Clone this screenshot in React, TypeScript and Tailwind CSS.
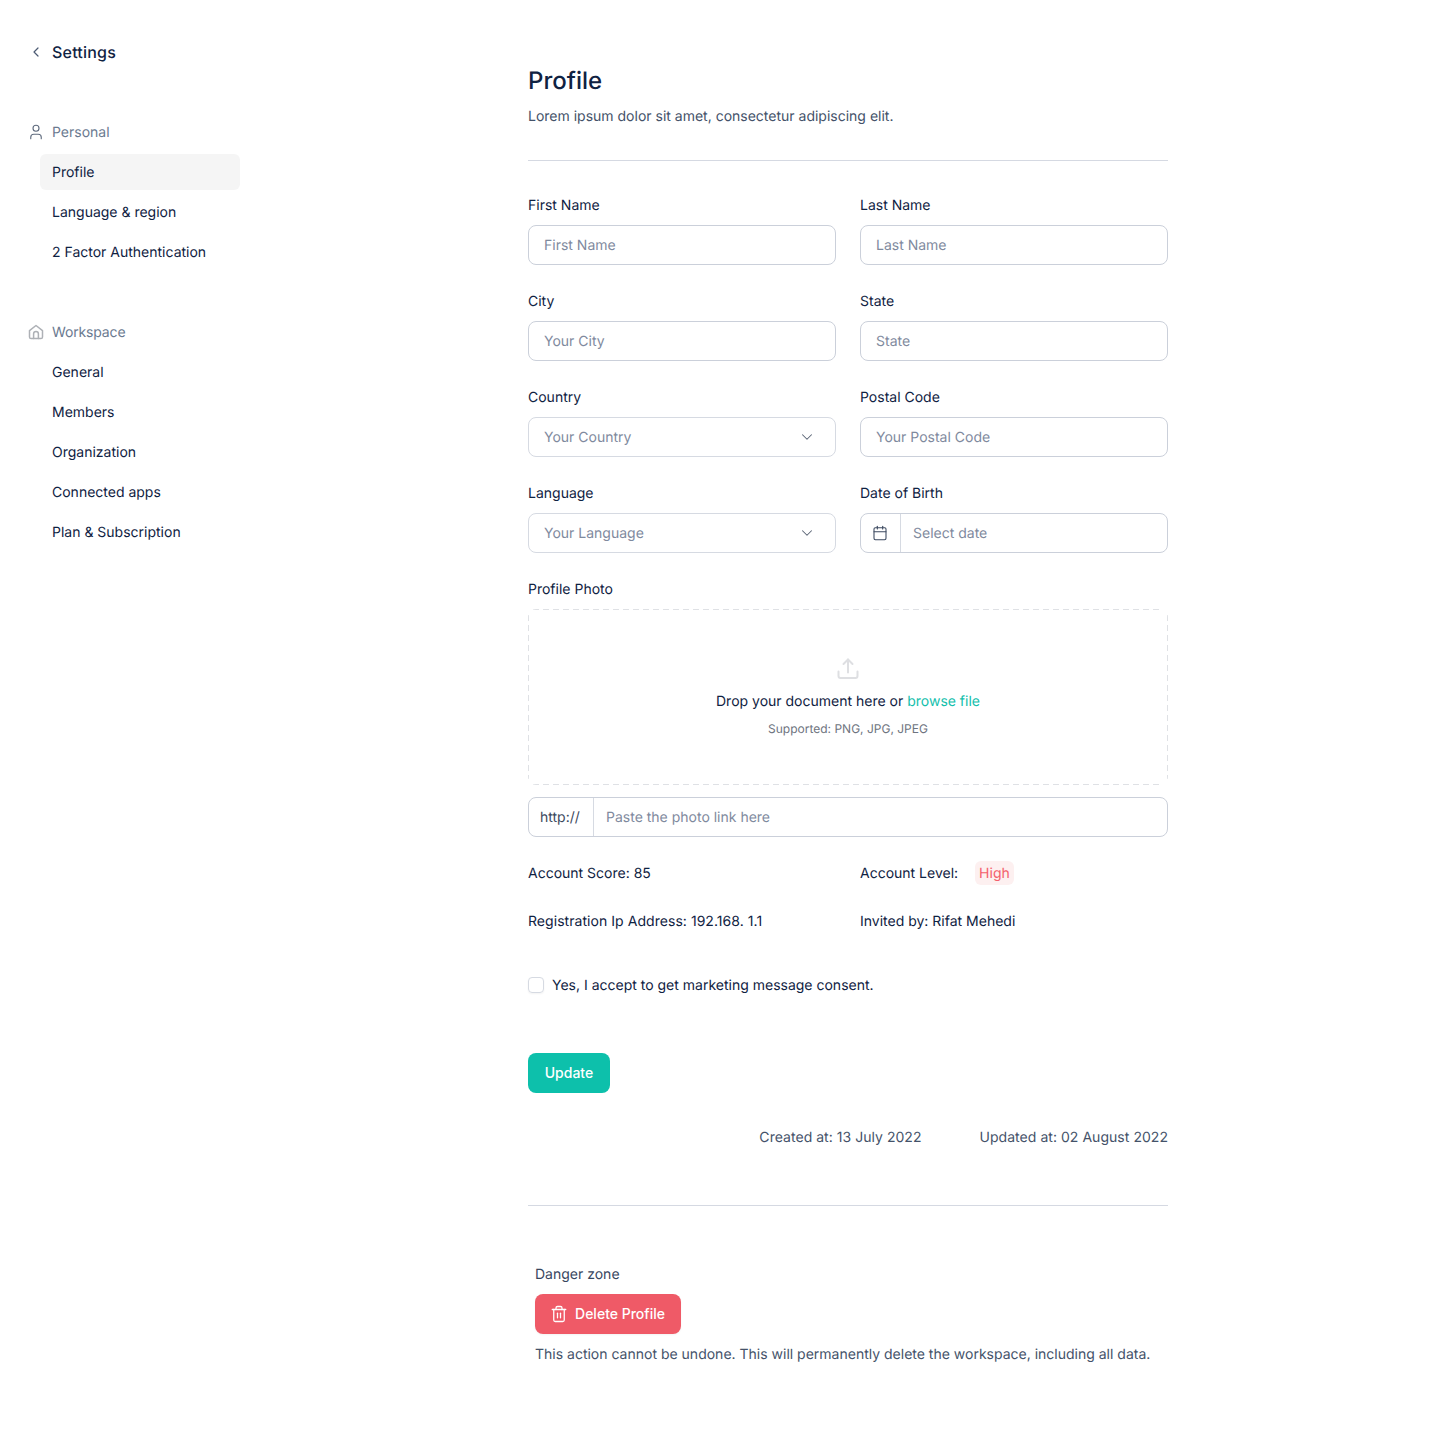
import React from "react";
import { ChevronLeft, ChevronDown, Calendar, Trash2, User } from "lucide-react";

const ink = "text-[#0f2242]";

function HomeIcon() {
  return (
    <svg width="16" height="16" viewBox="0 0 16 16" fill="none" stroke="#aeb1b6" strokeWidth="1.5" strokeLinejoin="round" strokeLinecap="round">
      <path d="M1.5 6.6 8 1.5l6.5 5.1v6.4a1.6 1.6 0 0 1-1.6 1.6H3.1a1.6 1.6 0 0 1-1.6-1.6z" />
      <path d="M5.6 14.4V9.8a2.4 2.4 0 0 1 4.8 0v4.6" />
    </svg>
  );
}

function UploadIcon() {
  return (
    <svg width="24" height="24" viewBox="0 0 24 24" fill="none" stroke="#dedfe2" strokeWidth="2" strokeLinejoin="round" strokeLinecap="round">
      <path d="M12 15.5V2.5" />
      <path d="M7.5 7 12 2.5 16.5 7" />
      <path d="M2.5 14.5V19a2 2 0 0 0 2 2h15a2 2 0 0 0 2-2v-4.5" />
    </svg>
  );
}

function NavItem({ label, active }: { label: string; active?: boolean }) {
  return (
    <div className={`ml-3 flex h-9 w-[200px] items-center rounded-md px-3 pt-[2px] text-sm ${ink} ${active ? "bg-[#f5f5f5]" : ""}`}>
      {label}
    </div>
  );
}

function Field({ label, children }: { label: string; children: React.ReactNode }) {
  return (
    <div className="flex flex-col gap-2">
      <div className={`h-6 pt-px text-sm leading-6 ${ink}`}>{label}</div>
      {children}
    </div>
  );
}

function TextBox({ placeholder }: { placeholder: string }) {
  return (
    <div className="flex h-10 items-center rounded-lg border border-[#cbd0da] px-[15px] pt-[2px] text-sm text-[#7f8a9e]">{placeholder}</div>
  );
}

function SelectBox({ placeholder }: { placeholder: string }) {
  return (
    <div className="flex h-10 items-center justify-between rounded-lg border border-[#d6dae2] pl-[15px] pr-[19px] text-sm text-[#7f8a9e]">
      <span className="pt-[2px]">{placeholder}</span>
      <ChevronDown size={18} strokeWidth={1.4} className="text-[#5a6475]" />
    </div>
  );
}

export default function App() {
  return (
    <div className="flex h-[1430px] bg-white font-['Inter',sans-serif] [text-rendering:geometricPrecision]">
      <aside className="w-[528px] shrink-0 pl-7 pt-10">
        <div className={`flex h-6 items-center gap-2 ${ink}`}>
          <ChevronLeft size={16} strokeWidth={1.8} className="text-[#4b5a73]" />
          <span className="text-base font-medium tracking-[0.2px]">Settings</span>
        </div>
        <div className="mt-[50px] flex flex-col gap-1">
          <div className="flex h-9 items-center gap-2 text-sm text-[#6b7a90]">
            <User size={18} strokeWidth={1.5} className="-mx-px text-[#5f6b7e]" />
            <span className="pt-[2px]">Personal</span>
          </div>
          <NavItem label="Profile" active />
          <NavItem label="Language &amp; region" />
          <NavItem label="2 Factor Authentication" />
        </div>
        <div className="mt-[44px] flex flex-col gap-1">
          <div className="flex h-9 items-center gap-2 text-sm text-[#6b7a90]">
            <HomeIcon />
            <span className="pt-[2px] tracking-[-0.15px]">Workspace</span>
          </div>
          <NavItem label="General" />
          <NavItem label="Members" />
          <NavItem label="Organization" />
          <NavItem label="Connected apps" />
          <NavItem label="Plan &amp; Subscription" />
        </div>
      </aside>

      <main className="w-[640px] shrink-0 pt-[63px]">
        <h1 className={`h-9 text-2xl leading-9 font-medium ${ink}`}>Profile</h1>
        <p className="mt-[5px] h-6 pt-px text-sm leading-6 text-[#445269]">Lorem ipsum dolor sit amet, consectetur adipiscing elit.</p>
        <div className="mt-8 h-px bg-[#d5d9e2]" />

        <div className="mt-8 grid grid-cols-2 gap-x-6 gap-y-6">
          <Field label="First Name"><TextBox placeholder="First Name" /></Field>
          <Field label="Last Name"><TextBox placeholder="Last Name" /></Field>
          <Field label="City"><TextBox placeholder="Your City" /></Field>
          <Field label="State"><TextBox placeholder="State" /></Field>
          <Field label="Country"><SelectBox placeholder="Your Country" /></Field>
          <Field label="Postal Code"><TextBox placeholder="Your Postal Code" /></Field>
          <Field label="Language"><SelectBox placeholder="Your Language" /></Field>
          <Field label="Date of Birth">
            <div className="flex h-10 items-center rounded-lg border border-[#cbd0da] text-sm text-[#7f8a9e]">
              <div className="flex h-full w-10 shrink-0 items-center justify-center border-r border-[#d6dae2] pr-px">
                <Calendar size={16} strokeWidth={1.6} className="text-[#3c4a60]" />
              </div>
              <span className="pl-3 pt-[2px]">Select date</span>
            </div>
          </Field>
        </div>

        <div className="mt-6">
          <div className={`h-6 pt-px text-sm leading-6 ${ink}`}>Profile Photo</div>
          <div className="mt-2 flex h-[176px] flex-col items-center rounded-lg bg-no-repeat pt-[48px] [background-image:repeating-linear-gradient(to_right,#dfe1e5_0_6px,transparent_6px_10px),repeating-linear-gradient(to_right,#dfe1e5_0_6px,transparent_6px_10px),repeating-linear-gradient(to_bottom,#dfe1e5_0_6px,transparent_6px_10px),repeating-linear-gradient(to_bottom,#dfe1e5_0_6px,transparent_6px_10px)] [background-position:5px_0,5px_100%,0_6px,100%_6px] [background-size:calc(100%-10px)_1px,calc(100%-10px)_1px,1px_calc(100%-12px),1px_calc(100%-12px)]">
            <UploadIcon />
            <div className={`mt-[8px] h-6 pt-px text-sm leading-6 ${ink}`}>
              Drop your document here or <span className="text-[#14c0ac]">browse file</span>
            </div>
            <div className="mt-[6px] text-xs leading-5 text-[#6e7480]">Supported: PNG, JPG, JPEG</div>
          </div>
          <div className="mt-3 flex h-10 items-center rounded-lg border border-[#cbd0da] text-sm">
            <div className="flex h-full w-[65px] shrink-0 items-center border-r border-[#d6dae2] pl-[11px] pt-[2px] text-[#3c4a60]">http://</div>
            <span className="pl-3 pt-[2px] text-[#7f8a9e]">Paste the photo link here</span>
          </div>
        </div>

        <div className={`mt-6 grid grid-cols-2 gap-x-6 text-sm ${ink}`}>
          <div className="flex h-6 items-center pt-[2px]">Account Score: 85</div>
          <div className="flex h-6 items-center gap-[17px]">
            <span className="pt-[2px]">Account Level:</span>
            <span className="h-6 rounded-md bg-[#fdf0f0] px-1 pt-px leading-6 text-[#f4606c]">High</span>
          </div>
          <div className="mt-6 flex h-6 items-center pt-[2px] tracking-[0.05px]">Registration Ip Address: 192.168. 1.1</div>
          <div className="mt-6 flex h-6 items-center pt-[2px]">Invited by: Rifat Mehedi</div>
        </div>

        <div className={`mt-10 flex h-6 items-center gap-2 text-sm ${ink}`}>
          <div className="h-4 w-4 rounded border border-[#d6dae2] shadow-xs" />
          <span className="pt-[2px]">Yes, I accept to get marketing message consent.</span>
        </div>

        <button className="mt-[56px] h-10 w-[82px] rounded-lg bg-[#0dc0ab] text-sm font-medium text-white">Update</button>

        <div className="mt-8 flex h-6 items-center justify-end gap-[58px] text-sm text-[#445269]">
          <span className="pt-[2px] tracking-[0.04px]">Created at: 13 July 2022</span>
          <span className="pt-[2px] tracking-[0.04px]">Updated at: 02 August 2022</span>
        </div>

        <div className="mt-[56px] h-px bg-[#d5d9e2]" />

        <div className="mt-[56px] pl-[7px]">
          <div className="h-6 pt-px text-sm leading-6 text-[#37465e]">Danger zone</div>
          <button className="mt-2 flex h-10 w-[146px] items-center justify-center gap-2 rounded-lg bg-[#ef5a67] text-sm font-medium text-white shadow-xs">
            <Trash2 size={18} strokeWidth={1.7} className="-mx-px" />
            <span>Delete Profile</span>
          </button>
          <p className="mt-2 h-6 pt-px text-sm leading-6 text-[#445269]">This action cannot be undone. This will permanently delete the workspace, including all data.</p>
        </div>
      </main>
    </div>
  );
}
